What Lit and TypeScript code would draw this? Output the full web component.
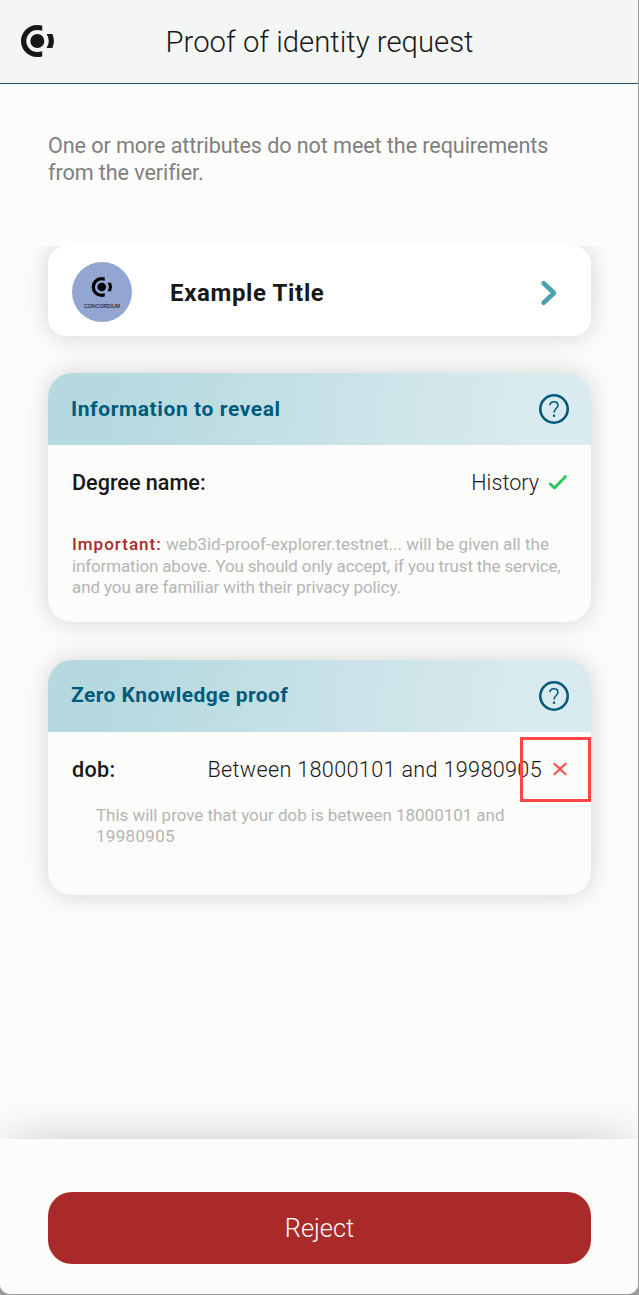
import { LitElement, html, css, svg } from "lit";
import { customElement, property } from "lit/decorators.js";

const mark = svg`
  <path d="M22.2 .6Q20 0 17 0A16 16 0 1 0 17 32Q20 32 22.2 31.4V26.2Q20 27 17.3 27A11 11 0 1 1 17.3 5Q20 5 22.2 5.8Z"/>
  <circle cx="17.3" cy="16" r="7"/>
  <path d="M26.6 9.1H32.4Q35.4 16 32.4 22.9H26.6Q31 16 26.6 9.1Z"/>`;

@customElement("help-icon")
export class HelpIcon extends LitElement {
  static styles = css`
    :host { display: block; width: 30px; height: 30px; }
    svg { display: block; }
  `;
  render() {
    return html`<svg width="30" height="30" viewBox="0 0 30 30" fill="none" stroke="#005b7b">
      <circle cx="15" cy="15" r="13.7" stroke-width="2.6"/>
      <path d="M11 11.2C11.1 8.9 12.7 7.8 15 7.8S18.9 9.2 18.9 11.3C18.9 14.4 15 14.8 15 18.6" stroke-width="1.6"/>
      <circle cx="15" cy="21.7" r="1.2" fill="#005b7b" stroke="none"/>
    </svg>`;
  }
}

@customElement("proof-card")
export class ProofCard extends LitElement {
  @property() heading = "";
  static styles = css`
    :host { display: block; border-radius: 24px; background: #fcfcfa; box-shadow: 0 0 26px rgba(0, 0, 0, 0.17); }
    .head {
      display: flex; align-items: center; justify-content: space-between;
      box-sizing: border-box; height: 72px; padding: 0 22px 0 23px;
      border-radius: 24px 24px 0 0;
      background: linear-gradient(99deg, #b5d9df 12%, #daebef 90%);
      color: #005b7b; font: 700 21px/27px Roboto, sans-serif;
    }
    .title { letter-spacing: var(--title-spacing, 0); padding-bottom: var(--title-lift, 0); }
  `;
  render() {
    return html`<div class="head"><span class="title">${this.heading}</span><help-icon></help-icon></div><slot></slot>`;
  }
}

@customElement("app-root")
export class AppRoot extends LitElement {
  static styles = css`
    :host { display: block; height: 1295px; background: #9b9b9b; font-family: Roboto, sans-serif; color: #181816; }
    .window {
      box-sizing: border-box; width: 638px; height: 1294px; overflow: hidden;
      display: flex; flex-direction: column; background: #fcfcfa; border-radius: 0 0 10px 10px;
    }
    header {
      box-sizing: border-box; height: 84px; flex: none; display: grid; grid-template-columns: 58px 1fr 58px;
      align-items: center; padding: 0 19px 0 20px; background: #f4f6f6; border-bottom: 1px solid #2c5464;
    }
    .logo { display: block; }
    h1 { margin: 0; padding-top: 1px; text-align: center; font: 300 29.3px/40px Roboto, sans-serif; white-space: nowrap; }
    main { flex: 1; padding: 0 47px 0 48px; }
    p { margin: 0; white-space: nowrap; }
    .line { display: block; }
    .intro { padding-top: 48px; font-size: 21.6px; line-height: 27px; color: #7f7f7f; }
    .clip { margin: 60px -47px 0 -48px; padding: 0 47px 37px 48px; overflow: hidden; }
    .credential {
      box-sizing: border-box; height: 90px; border-radius: 18px; padding: 0 33px 0 24px;
      display: flex; align-items: center; background: #fff; box-shadow: 0 0 26px rgba(0, 0, 0, 0.17);
    }
    .avatar { display: block; margin-top: 2px; }
    .name { flex: 1; padding: 3px 0 0 38px; font-size: 24px; font-weight: 700; letter-spacing: 0.64px; }
    .chevron { margin-top: 4px; }
    .reveal { height: 249px; margin-bottom: 38px; --title-spacing: 0.6px; }
    .proof { height: 235px; --title-spacing: 0.45px; --title-lift: 2px; }
    .row { display: flex; align-items: center; padding: 24px 23px 0 24px; font-size: 21.6px; line-height: 27px; white-space: nowrap; }
    .key { flex: 1; font-weight: 500; }
    .k2 { letter-spacing: 0.3px; }
    .value { font-weight: 300; }
    .v2 { letter-spacing: 0.34px; }
    .check { margin-left: 9px; }
    .cross { margin: 0 1.5px 2px 10.5px; }
    .note { font-size: 17px; line-height: 21.6px; color: #b5b5b5; }
    .important { padding: 38px 24px 0; }
    .important strong { font-weight: 500; color: #aa2a2a; letter-spacing: 1px; }
    .explain { padding: 21.5px 48px 0; }
    .l1 { letter-spacing: -0.09px; }
    .l2 { letter-spacing: -0.09px; }
    .n1 { letter-spacing: 0.02px; }
    .n2 { letter-spacing: -0.15px; }
    .n3 { letter-spacing: -0.1px; }
    .n4 { letter-spacing: -0.04px; }
    .n5 { letter-spacing: 0.3px; }
    .marker { position: absolute; left: 520px; top: 737px; width: 71px; height: 65px; box-sizing: border-box; border: 3px solid #ff4747; }
    footer { flex: none; height: 155px; box-sizing: border-box; padding: 53px 47px 0 48px; background: #fcfcfa; box-shadow: 0 -8px 48px -8px rgba(0, 0, 0, 0.2); }
    button {
      display: block; width: 100%; height: 72px; border: 0; border-radius: 24px; background: #aa2a2a;
      color: #fff; font: 300 25.4px/40px Roboto, sans-serif;
    }
    .caption { font: 5px "Liberation Sans", sans-serif; }
  `;

  render() {
    return html`
      <div class="window">
        <header>
          <svg class="logo" width="35" height="33" viewBox="0 0 35 33" fill="#181816">${mark}</svg>
          <h1>Proof of identity request</h1>
        </header>
        <main>
          <p class="intro">
            <span class="line l1">One or more attributes do not meet the requirements</span>
            <span class="line l2">from the verifier.</span>
          </p>
          <div class="clip">
            <div class="credential">
              <svg class="avatar" width="60" height="60" viewBox="0 0 60 60">
                <circle cx="30" cy="30" r="30" fill="#93a6d1"/>
                <g transform="translate(19 15.1) scale(.62)">${mark}</g>
                <text class="caption" x="12" y="46" textLength="36" lengthAdjust="spacingAndGlyphs">CONCORDIUM</text>
              </svg>
              <span class="name">Example Title</span>
              <svg class="chevron" width="18" height="26" viewBox="0 0 18 26" fill="none" stroke="#4aa2ae" stroke-width="4.6" stroke-linecap="round" stroke-linejoin="round"><path d="M3.6 3.3L14 13L3.6 22.7"/></svg>
            </div>
          </div>
          <proof-card class="reveal" heading="Information to reveal">
            <div class="row">
              <span class="key">Degree name:</span><span class="value">History</span>
              <svg class="check" width="20" height="18" viewBox="0 0 20 18" fill="none" stroke="#2ec562" stroke-width="3" stroke-linecap="round" stroke-linejoin="round"><path d="M2.2 10L6.5 14L17.3 2.7"/></svg>
            </div>
            <p class="note important">
              <span class="line n1"><strong>Important:</strong> web3id-proof-explorer.testnet... will be given all the</span>
              <span class="line n2">information above. You should only accept, if you trust the service,</span>
              <span class="line n3">and you are familiar with their privacy policy.</span>
            </p>
          </proof-card>
          <proof-card class="proof" heading="Zero Knowledge proof">
            <div class="row">
              <span class="key k2">dob:</span><span class="value v2">Between 18000101 and 19980905</span>
              <svg class="cross" width="14" height="14" viewBox="0 0 14 14" fill="none" stroke="#ff5050" stroke-width="2.2"><path d="M.8 1.2L13.2 12.8M13.2 1.2L.8 12.8"/></svg>
            </div>
            <p class="note explain">
              <span class="line n4">This will prove that your dob is between 18000101 and</span>
              <span class="line n5">19980905</span>
            </p>
          </proof-card>
        </main>
        <footer><button>Reject</button></footer>
      </div>
      <div class="marker"></div>`;
  }
}
